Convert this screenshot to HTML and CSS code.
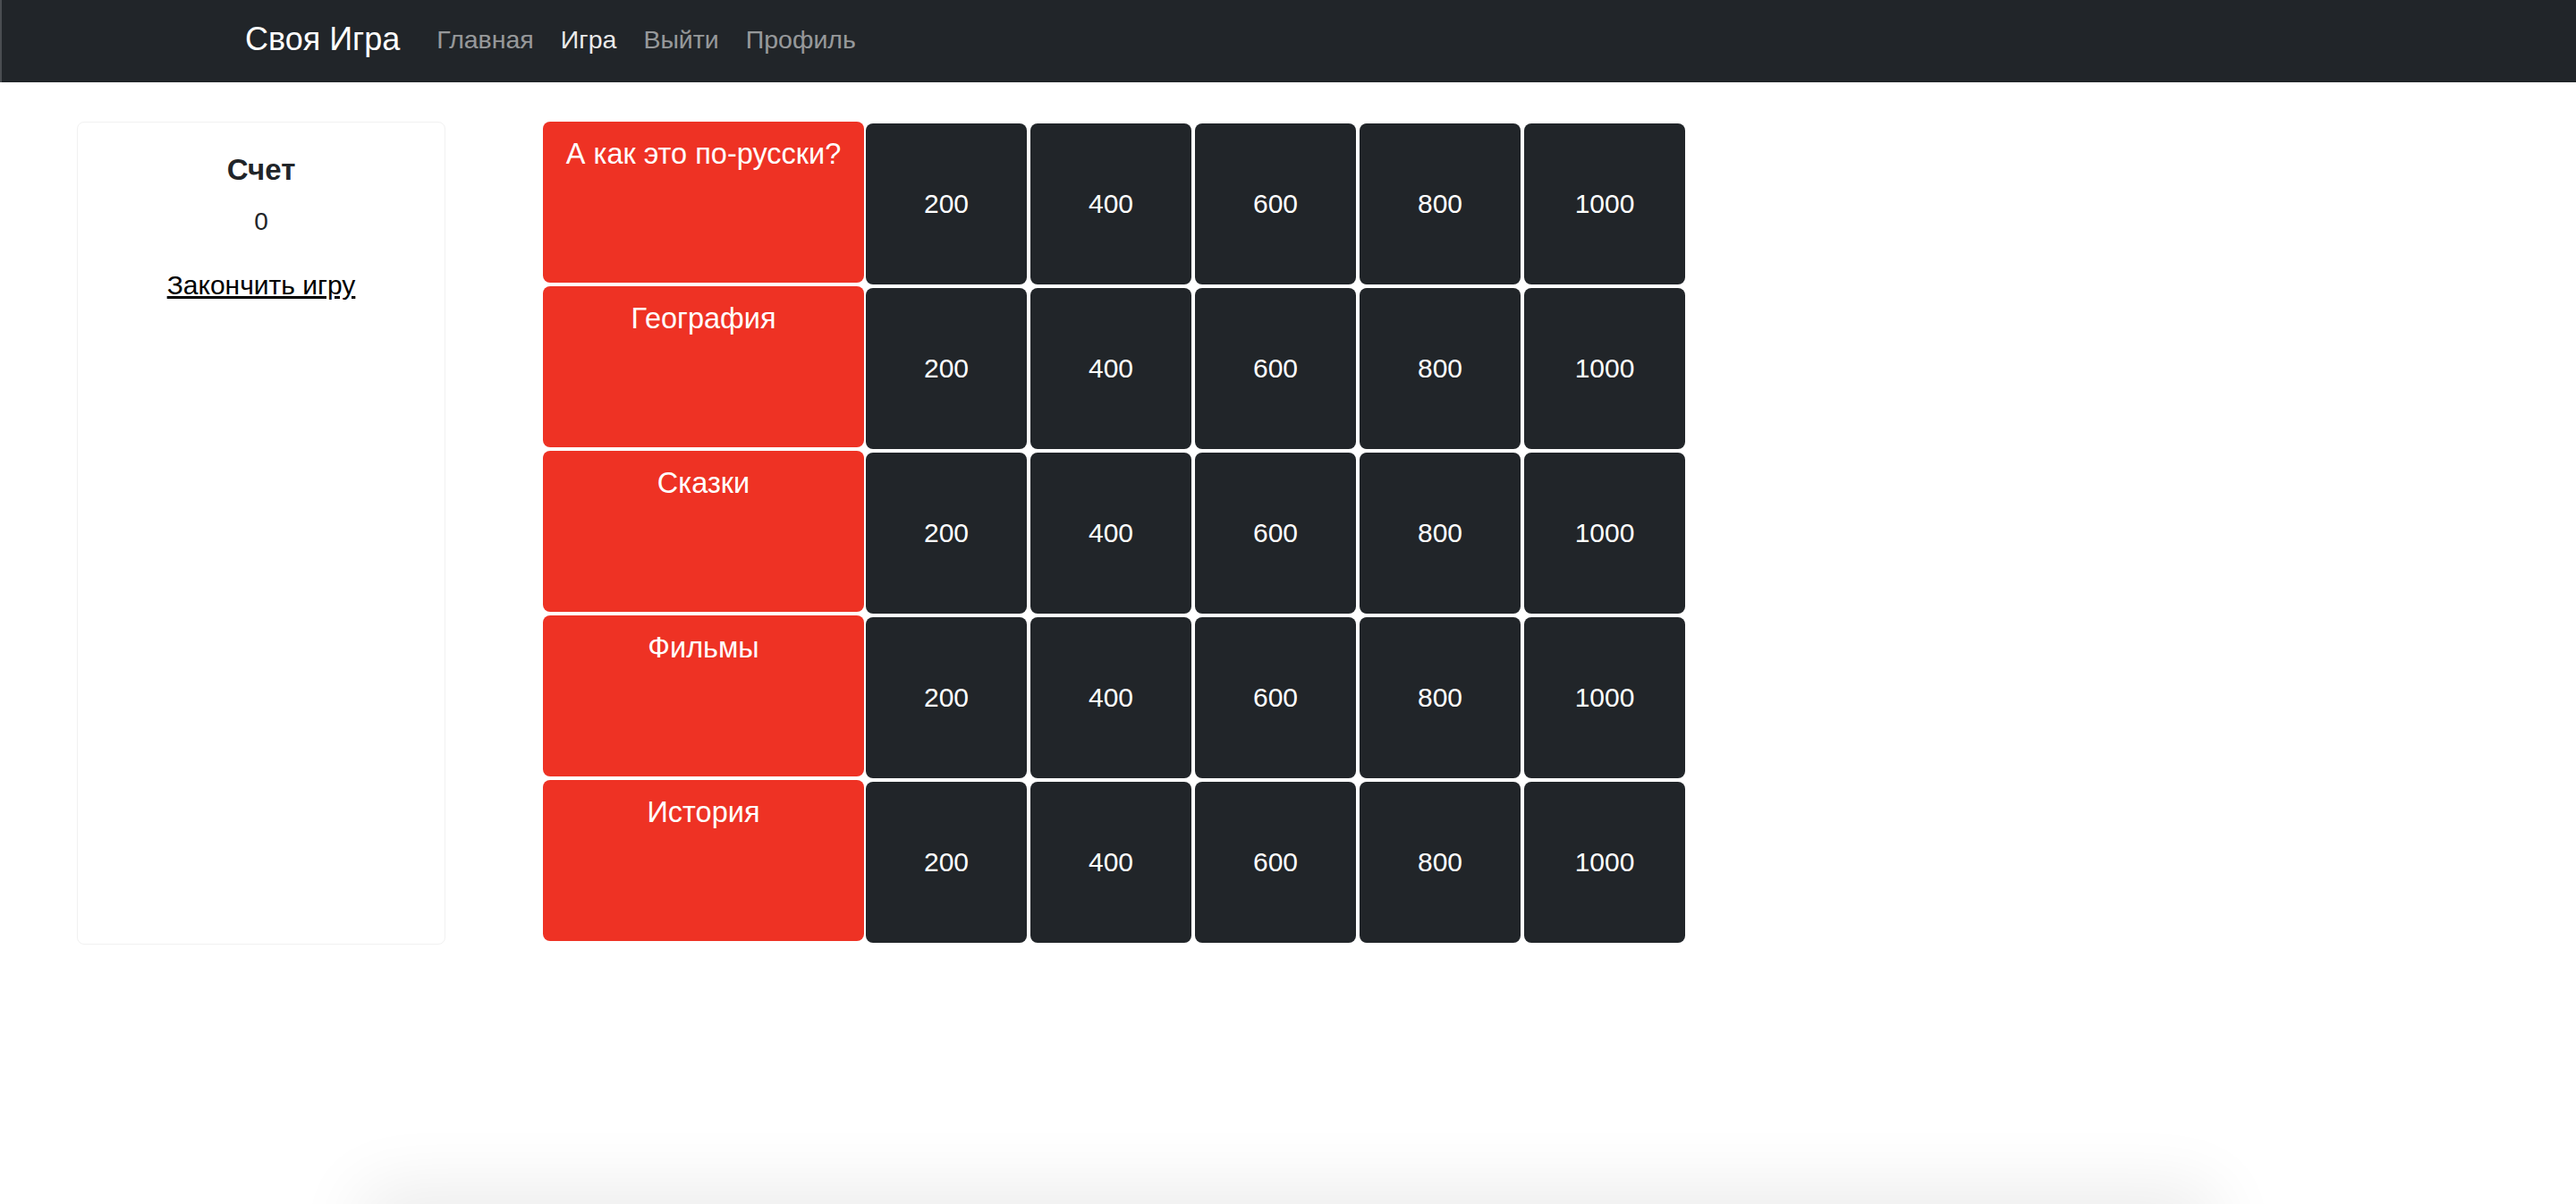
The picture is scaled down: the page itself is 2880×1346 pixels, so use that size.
FILE: index.html
```html
<!DOCTYPE html>
<html lang="ru">
<head>
<meta charset="utf-8">
<title>Своя Игра</title>
<link rel="stylesheet" href="styles.css">
</head>
<body>
<nav class="navbar">
  <a class="brand" href="#">Своя Игра</a>
  <ul class="nav-links">
    <li><a class="nav-link" href="#">Главная</a></li>
    <li><a class="nav-link active" href="#">Игра</a></li>
    <li><a class="nav-link" href="#">Выйти</a></li>
    <li><a class="nav-link" href="#">Профиль</a></li>
  </ul>
</nav>
<main class="main">
  <aside class="score-card">
    <h5 class="score-title">Счет</h5>
    <p class="score-value">0</p>
    <a class="end-link" href="#">Закончить игру</a>
  </aside>
  <section class="board">
    <div class="board-row">
      <div class="category">А как это по-русски?</div>
      <div class="tile">200</div><div class="tile">400</div><div class="tile">600</div><div class="tile">800</div><div class="tile">1000</div>
    </div>
    <div class="board-row">
      <div class="category">География</div>
      <div class="tile">200</div><div class="tile">400</div><div class="tile">600</div><div class="tile">800</div><div class="tile">1000</div>
    </div>
    <div class="board-row">
      <div class="category">Сказки</div>
      <div class="tile">200</div><div class="tile">400</div><div class="tile">600</div><div class="tile">800</div><div class="tile">1000</div>
    </div>
    <div class="board-row">
      <div class="category">Фильмы</div>
      <div class="tile">200</div><div class="tile">400</div><div class="tile">600</div><div class="tile">800</div><div class="tile">1000</div>
    </div>
    <div class="board-row">
      <div class="category">История</div>
      <div class="tile">200</div><div class="tile">400</div><div class="tile">600</div><div class="tile">800</div><div class="tile">1000</div>
    </div>
  </section>
</main>
<div class="bottom-shadow"></div>
</body>
</html>
```
FILE: styles.css
```css
* { box-sizing: border-box; }
html, body {
  margin: 0;
  padding: 0;
  background: #ffffff;
  font-family: "Liberation Sans", Arial, sans-serif;
  color: #212529;
  overflow: hidden;
}
.navbar {
  height: 92px;
  background: #212529;
  border-left: 2px solid #4a4d51;
  display: flex;
  align-items: center;
  padding-left: 272px;
  padding-bottom: 4px;
}
.brand {
  color: #ffffff;
  font-size: 36px;
  text-decoration: none;
  margin-right: 41px;
  line-height: 1;
}
.nav-links {
  display: flex;
  list-style: none;
  margin: 0;
  padding: 0;
  gap: 30px;
}
.nav-link {
  color: rgba(255, 255, 255, 0.55);
  font-size: 28.5px;
  text-decoration: none;
  line-height: 1;
}
.nav-link.active { color: rgba(255, 255, 255, 0.92); }
.main {
  display: flex;
  align-items: stretch;
  padding-top: 44px;
  padding-left: 86px;
}
.score-card {
  width: 412px;
  border: 1px solid #f1f1f1;
  border-radius: 8px;
  text-align: center;
  padding-top: 34px;
}
.score-title {
  margin: 0 0 18px;
  font-size: 33px;
  font-weight: 700;
  line-height: 38px;
  color: #212529;
}
.score-value {
  margin: 0 0 29px;
  font-size: 28px;
  line-height: 42px;
  color: #212529;
}
.end-link {
  font-size: 30px;
  line-height: 42px;
  color: #000000;
  text-decoration: underline;
}
.board {
  margin-left: 109px;
  display: flex;
  flex-direction: column;
}
.board-row {
  display: flex;
  align-items: flex-start;
}
.category {
  width: 359px;
  height: 180px;
  margin-bottom: 4px;
  background: #ee3224;
  border-radius: 8px;
  color: #ffffff;
  font-size: 32.5px;
  line-height: 38px;
  text-align: center;
  padding-top: 17px;
}
.tile {
  width: 180px;
  height: 180px;
  margin: 2px;
  background: #212529;
  border-radius: 8px;
  color: #ffffff;
  font-size: 30px;
  display: flex;
  align-items: center;
  justify-content: center;
}
.bottom-shadow {
  position: fixed;
  left: 420px;
  right: 420px;
  bottom: -50px;
  height: 50px;
  box-shadow: 0 0 80px 14px rgba(0, 0, 0, 0.09);
}
```
